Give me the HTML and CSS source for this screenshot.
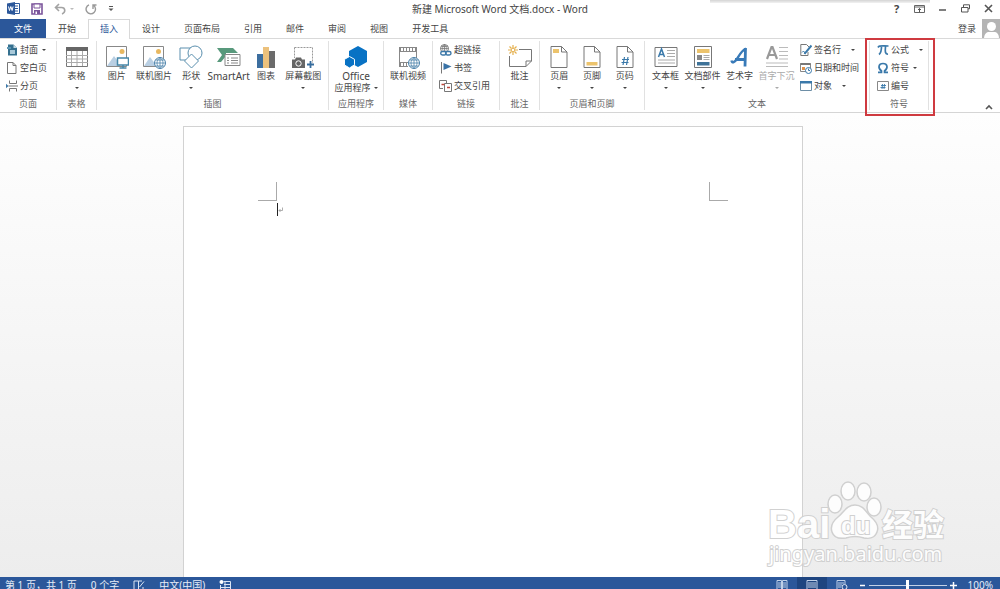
FILE: index.html
```html
<!DOCTYPE html>
<html lang="zh-CN">
<head>
<meta charset="UTF-8">
<meta name="viewport" content="width=device-width, initial-scale=1.0">
<title>新建 Microsoft Word 文档.docx - Word</title>
<link rel="stylesheet" href="styles.css">
</head>
<body>
    <header class="titlebar">
        <div class="quick">
            <svg width="13" height="13" viewBox="0 0 13 13"><path d="M7 1.500h5.500v10H7z" fill="#fff" stroke="#2b579a"/><path d="M8 4h3M8 6.500h3M8 9h3" stroke="#2b579a"/><path d="M0 1.500L8 0v13L0 11.500z" fill="#2b579a"/><path d="M1.500 4.500l1 4 1.300-4 1.300 4 1-4" fill="none" stroke="#fff"/></svg>
            <button aria-label="保存"><svg width="12" height="12" viewBox="0 0 12 12"><path d="M1 1h10v10H1z" fill="#fff" stroke="#7c559c" stroke-width="1.600"/><path d="M3 1h6v4H3z" fill="#fff" stroke="#7c559c"/><path d="M3 7h6v4H3z" fill="#7c559c"/><path d="M4.500 8.500h1.500V11H4.500z" fill="#fff"/></svg></button>
            <button aria-label="撤销"><svg width="20" height="12" viewBox="0 0 20 12"><path d="M5 1L1.500 4.500 5 8M2 4.500h5.500c4 0 4.500 5 .5 6.500" fill="none" stroke="#a3a3a3" stroke-width="1.600"/><path d="M16 5h4l-2 2z" fill="#bbb"/></svg></button>
            <button aria-label="重复"><svg width="12" height="12" viewBox="0 0 12 12"><path d="M4 1.800a4.700 4.700 0 1 0 4.500.5M8 6V2h3.500" fill="none" stroke="#999" stroke-width="1.400"/></svg></button>
            <button aria-label="自定义快速访问工具栏"><svg width="6" height="6" viewBox="0 0 6 6"><path d="M1 .5h4" stroke="#555"/><path d="M.5 2.500h5L3 5z" fill="#555"/></svg></button>
        </div>
        <h1>新建 Microsoft Word 文档.docx - Word</h1>
        <div class="window-buttons">
            <button class="help">?</button>
            <button aria-label="功能区显示选项"><svg width="11" height="10" viewBox="0 0 11 10"><path d="M.5 1.500h10v7H.5zM.5 3h10" fill="none" stroke="#666"/><path d="M5.500 8V4.500M4 6l1.500-1.500L7 6" fill="none" stroke="#555"/></svg></button>
            <button aria-label="最小化"><svg width="9" height="9" viewBox="0 0 9 9"><path d="M1 6h7" stroke="#555" stroke-width="1.500"/></svg></button>
            <button aria-label="还原"><svg width="9" height="9" viewBox="0 0 9 9"><path d="M2.500 3V.8h6v4H7M.5 3.500H7v4.500H.5z" fill="none" stroke="#555"/></svg></button>
            <button aria-label="关闭"><svg width="9" height="9" viewBox="0 0 9 9"><path d="M1 1l7 7M8 1L1 8" stroke="#555" stroke-width="1.600"/></svg></button>
        </div>
        <div class="top-shadow"></div>
    </header>

    <nav class="tabs">
        <a class="file" href="#">文件</a>
        <a href="#">开始</a>
        <a class="active" href="#">插入</a>
        <a href="#">设计</a>
        <a href="#">页面布局</a>
        <a href="#">引用</a>
        <a href="#">邮件</a>
        <a href="#">审阅</a>
        <a href="#">视图</a>
        <a href="#">开发工具</a>
        <div class="account">
            <a href="#">登录</a>
            <svg width="18" height="20" viewBox="0 0 18 20"><path d="M0 0h18v20H0z" fill="#b4b4b4"/><circle cx="9.500" cy="7.500" r="4.500" fill="#fff"/><path d="M2 20c0-5 2.500-7 5-7h5c3 0 5 2 5 7z" fill="#fff"/></svg>
        </div>
    </nav>

    <main class="ribbon">
        <section class="group">
            <div class="tools small">
                <button><svg width="12" height="12" viewBox="0 0 12 12"><path d="M2 .5h5.500L11 4v7.500H2z" fill="#35708f"/><path d="M7.500.5V4H11z" fill="#c4d8e2"/><path d="M4 6h5v4H4z" fill="#a9c9d9"/><path d="M1 3h4v2H1z" fill="#5c96b4"/></svg>封面<i class="arrow"></i></button>
                <button><svg width="12" height="12" viewBox="0 0 12 12"><path d="M1.500 .5h5.500L10 3.500v8H1.500zM7 .5v3h3" fill="#fff" stroke="#777"/></svg>空白页</button>
                <button><svg width="12" height="12" viewBox="0 0 12 12"><path d="M3.500 .5V3.500h7V.5M3.500 11.500V8.500h7v3M2.500 6h9.500" fill="none" stroke="#777"/><path d="M0 3.800L2.500 6 0 8.200z" fill="#3d78a8"/></svg>分页</button>
            </div>
            <h2>页面</h2>
        </section>

        <section class="group">
            <div class="tools large">
                <button><svg width="24" height="24" viewBox="0 0 24 24"><path d="M1.500 3.500h21v18h-21z" fill="#fff" stroke="#777"/><path d="M1 2h22v4H1z" fill="#666"/><path d="M1 10.500h22M1 14h22M1 17.500h22M6.500 6v15M12 6v15M17.500 6v15" stroke="#aaa"/></svg><span>表格</span><i class="arrow"></i></button>
            </div>
            <h2>表格</h2>
        </section>

        <section class="group illustrations">
            <div class="tools large">
                <button><svg width="24" height="24" viewBox="0 0 24 24"><path d="M1.500 1.500h20v20h-20z" fill="#fff" stroke="#888"/><circle cx="17" cy="6.500" r="2.500" fill="#e8b860"/><path d="M2 21l7-10 6 8v2z" fill="#b9cfe3"/><path d="M12.500 13h11v7h-11z" fill="#fff" stroke="#4587a8" stroke-width="1.500"/><path d="M18 20v3M14.500 23h7" stroke="#4587a8" stroke-width="1.500"/></svg><span>图片</span></button>
                <button><svg width="24" height="24" viewBox="0 0 24 24"><path d="M1.500 1.500h20v20h-20z" fill="#fff" stroke="#888"/><circle cx="16.500" cy="6.500" r="2.500" fill="#e8b860"/><path d="M2 21l6-9 6 8v1z" fill="#b9cfe3"/><circle cx="18" cy="18" r="5.500" fill="#fff" stroke="#4c83ab"/><path d="M12.500 18h11M13.500 15h9M13.500 21h9M18 12.500v11M18 12.500c-4 3-4 8 0 11 4-3 4-8 0-11" fill="none" stroke="#4c83ab" stroke-width=".8"/></svg><span>联机图片</span></button>
                <button><svg width="24" height="24" viewBox="0 0 24 24"><path d="M1 3h12v12H1z" fill="#fff" stroke="#5a8fae"/><circle cx="16" cy="8" r="7" fill="#fff" stroke="#5a8fae"/><path d="M12.500 9l7 7-7 7-7-7z" fill="#fff" stroke="#5a8fae"/></svg><span>形状</span><i class="arrow"></i></button>
                <button><svg width="24" height="24" viewBox="0 0 24 24"><path d="M0 3h16l5 5H9v3l-5 6H0l5-7z" fill="#58997c"/><path d="M8 9.500h15v11H8z" fill="#fff" stroke="#888"/><path d="M10 13h2M14 13h7M10 15.500h2M14 15.500h7M10 18h2M14 18h7" stroke="#888"/></svg><span class="latin">SmartArt</span></button>
                <button><svg width="24" height="24" viewBox="0 0 24 24"><path d="M3 9h6v14H3z" fill="#3c6e9f"/><path d="M9 2h6v21H9z" fill="#ecc17c"/><path d="M15 6h6v17h-6z" fill="#6b6b6b"/></svg><span>图表</span></button>
                <button><svg width="24" height="24" viewBox="0 0 24 24"><path d="M3.500 2.500h18V18M3.500 2.500V13" fill="none" stroke="#999" stroke-dasharray="2 1"/><path d="M1 14.500h3l1-2h5l1 2h3V23H1z" fill="#666"/><circle cx="7.500" cy="18.500" r="2.700" fill="#666" stroke="#fff"/><path d="M19.500 16v7M16 19.500h7" stroke="#386d9d" stroke-width="1.800"/></svg><span>屏幕截图</span><i class="arrow"></i></button>
            </div>
            <h2>插图</h2>
        </section>

        <section class="group">
            <div class="tools large">
                <button><svg width="24" height="24" viewBox="0 0 24 24"><path d="M14 1l9 5v11l-9 5-9-5V6z" fill="#0872c4"/><path d="M5.500 11.500l5 2.800v5.500L5.500 23 .5 20v-5.700z" fill="#0872c4" stroke="#fff"/></svg><span class="latin">Office</span><span class="second">应用程序<i class="arrow"></i></span></button>
            </div>
            <h2>应用程序</h2>
        </section>

        <section class="group">
            <div class="tools large">
                <button><svg width="24" height="24" viewBox="0 0 24 24"><path d="M3 2.500h18M3 6.500h18M3 17.500h9M3 21.500h9M3.500 2v20M20.500 2v11" fill="none" stroke="#888"/><path d="M4 4.500h17M4 19.500h8" stroke="#888" stroke-width="3" stroke-dasharray="1 2"/><circle cx="18" cy="18" r="5.500" fill="#fff" stroke="#4c83ab"/><path d="M12.500 18h11M13.500 15h9M13.500 21h9M18 12.500v11M18 12.500c-4 3-4 8 0 11 4-3 4-8 0-11" fill="none" stroke="#4c83ab" stroke-width=".8"/></svg><span>联机视频</span></button>
            </div>
            <h2>媒体</h2>
        </section>

        <section class="group">
            <div class="tools small">
                <button><svg width="13" height="12" viewBox="0 0 13 12"><circle cx="5.500" cy="4.500" r="4" fill="#fff" stroke="#777"/><path d="M1.500 4.500h8M2.500 2.500h6M5.500.5v8M5.500.5c-2.500 2-2.500 6 0 8 2.500-2 2.500-6 0-8" fill="none" stroke="#777" stroke-width=".8"/><path d="M2 7h10v5H2z" fill="#fff"/><rect x="1.700" y="7.500" width="5.500" height="3.500" rx="1.700" fill="none" stroke="#3d78a8" stroke-width="1.400"/><rect x="6.500" y="7.500" width="5.500" height="3.500" rx="1.700" fill="none" stroke="#3d78a8" stroke-width="1.400"/></svg>超链接</button>
                <button><svg width="13" height="12" viewBox="0 0 13 12"><path d="M2.500 0v11.500" stroke="#777"/><path d="M4.500 1l8 3.500-8 3.500z" fill="#3a73a6"/></svg>书签</button>
                <button><svg width="13" height="12" viewBox="0 0 13 12"><path d="M7.500 3V.5h-7v8H4M5.500 3.500h7v8h-7z" fill="none" stroke="#777"/><path d="M2.500 4.500h3M8 7.500h3" stroke="#c0473e" stroke-width="1.500"/></svg>交叉引用</button>
            </div>
            <h2>链接</h2>
        </section>

        <section class="group">
            <div class="tools large">
                <button><svg width="24" height="24" viewBox="0 0 24 24"><path d="M11 4.500h12.500V16L18 21.500H1.500V11M23.500 16H18v5.500" fill="#fff" stroke="#777"/><path d="M5 0v3M5 7v3M0 5h3M7 5h3M1.500 1.500l2 2M8.500 1.500l-2 2M1.500 8.500l2-2M8.500 8.500l-2-2" stroke="#e5b04e" stroke-width="1.200"/><circle cx="5" cy="5" r="1.800" fill="#fff" stroke="#e5b04e"/></svg><span>批注</span></button>
            </div>
            <h2>批注</h2>
        </section>

        <section class="group header-footer">
            <div class="tools large">
                <button><svg width="24" height="24" viewBox="0 0 24 24"><path d="M4 1.500h10.500L20 7v15.500H4zM14.500 1.500V7H20" fill="#fff" stroke="#777"/><path d="M6 4h6v4H6z" fill="#ecc36c"/></svg><span>页眉</span><i class="arrow"></i></button>
                <button><svg width="24" height="24" viewBox="0 0 24 24"><path d="M4 1.500h10.500L20 7v15.500H4zM14.500 1.500V7H20" fill="#fff" stroke="#777"/><path d="M6.500 17h11v3.500h-11z" fill="#ecc36c"/></svg><span>页脚</span><i class="arrow"></i></button>
                <button><svg width="24" height="24" viewBox="0 0 24 24"><path d="M4 1.500h10.500L20 7v15.500H4zM14.500 1.500V7H20" fill="#fff" stroke="#777"/><path d="M11.500 12l-1.500 8M15 12l-1.500 8M9 14.500h7M8.500 17.500h7" stroke="#3a79aa" stroke-width="1.200"/></svg><span>页码</span><i class="arrow"></i></button>
            </div>
            <h2>页眉和页脚</h2>
        </section>

        <section class="group text-group">
            <div class="tool-row">
                <div class="tools large">
                    <button><svg width="24" height="24" viewBox="0 0 24 24"><path d="M1 2.500h22v19H1z" fill="#fff" stroke="#777"/><path d="M4.500 12l3-8 3 8M5.500 9.500h4" fill="none" stroke="#3a79aa" stroke-width="1.500"/><path d="M13 5.500h8M13 8.500h8M13 11.500h8M4 15h17M4 18h17" stroke="#aaa"/></svg><span>文本框</span><i class="arrow"></i></button>
                    <button><svg width="24" height="24" viewBox="0 0 24 24"><path d="M3.500 1.500h17v21h-17z" fill="#fff" stroke="#777"/><path d="M6 4h12.500v4H6z" fill="#ecc36c"/><path d="M6 10h5v5H6z" fill="#888"/><path d="M12.500 10.500h6M12.500 12.500h6M12.500 14.500h6" stroke="#aaa"/><path d="M6 17h12.500v3.500H6z" fill="#3f7399"/></svg><span>文档部件</span><i class="arrow"></i></button>
                    <button><svg width="24" height="24" viewBox="0 0 24 24"><path d="M3.500 15.500c.5 3 3 2 5-1C11 11 13 6 18 3.500" fill="none" stroke="#387ab8" stroke-width="2.400"/><path d="M17.500 3L17 21.500M7 14.500h10.500" fill="none" stroke="#387ab8" stroke-width="2.800"/></svg><span>艺术字</span><i class="arrow"></i></button>
                    <button disabled><svg width="24" height="24" viewBox="0 0 24 24"><path d="M2 14L6.500 2h1L12 14M3.500 10h7" fill="none" stroke="#999" stroke-width="2.200"/><path d="M14 2.500h9M14 6.500h9M14 10.500h9M14 14h9M1 18h22M1 21.500h22" stroke="#bbb"/></svg><span>首字下沉</span><i class="arrow"></i></button>
                </div>
                <div class="tools small">
                    <button><svg width="12" height="12" viewBox="0 0 12 12"><path d="M8 11.500H.8V.5h5.700L9 3M8 11.500V8" fill="#fff" stroke="#777"/><path d="M11.500 1.500L6 8l-1.500 2" stroke="#3a79aa" stroke-width="2"/><path d="M2 8.500l1.500-1.500L5 9" fill="none" stroke="#3a79aa"/></svg>签名行<i class="arrow far"></i></button>
                    <button><svg width="12" height="12" viewBox="0 0 12 12"><path d="M.5 1.500h10v8H.5z" fill="#fff" stroke="#888"/><path d="M.5 1h10v2H.5z" fill="#777"/><path d="M2 5h3v3H2z" fill="#df914b"/><circle cx="8.500" cy="8.500" r="3" fill="#fff" stroke="#3a79aa"/><path d="M8.500 6.500v2h1.500" fill="none" stroke="#3a79aa"/></svg>日期和时间</button>
                    <button><svg width="12" height="12" viewBox="0 0 12 12"><path d="M.5 1.500h11v9H.5z" fill="#fff" stroke="#6d8ea6"/><path d="M0 1h12v2.500H0z" fill="#3a79aa"/></svg>对象<i class="arrow far"></i></button>
                </div>
            </div>
            <h2>文本</h2>
        </section>

        <section class="group symbols">
            <div class="tools small">
                <button><svg width="12" height="12" viewBox="0 0 12 12"><path d="M1 3.500C2 1.500 3 2 11.500 2M4.500 2.500C4.500 6 4 9 2 10.500M8.500 2.500c-.5 5-.5 8 2.500 7.500" fill="none" stroke="#3a79aa" stroke-width="1.700"/></svg>公式<i class="arrow far"></i></button>
                <button><svg width="12" height="12" viewBox="0 0 12 12"><path d="M1 10.300h3.500V9C.5 6 1.500 1.500 6 1.500S11.500 6 7.500 9v1.300H11" fill="none" stroke="#3a79aa" stroke-width="1.700"/></svg>符号<i class="arrow"></i></button>
                <button><svg width="12" height="12" viewBox="0 0 12 12"><path d="M.5 1.500h11v9H.5z" fill="#fff" stroke="#888"/><path d="M5.500 4L5 9M7.500 4L7 9M4 5.500h5M3.500 7.500h5" stroke="#3a79aa" stroke-width=".9"/></svg>编号</button>
            </div>
            <h2>符号</h2>
            <div class="highlight"></div>
        </section>

        <div class="collapse">
            <button aria-label="折叠功能区"><svg width="8" height="6" viewBox="0 0 8 6"><path d="M1 5l3-3 3 3" fill="none" stroke="#555" stroke-width="1.600"/></svg></button>
        </div>
    </main>

    <div class="workspace">
        <article class="page">
            <div class="corners">
                <i class="corner left"></i>
                <i class="corner right"></i>
            </div>
            <div class="cursor"><svg width="6" height="13" viewBox="0 0 6 13"><path d="M.5 0v13" stroke="#222"/><path d="M5.500 4.500v3H2M3.500 6L2 7.500 3.500 9" fill="none" stroke="#999" stroke-width=".8"/></svg></div>
        </article>
        <svg class="watermark" width="184" height="92" viewBox="0 0 184 92">
            <g fill="#fff" stroke="#cdcdcd" stroke-width="1.500">
                <ellipse cx="70" cy="23" rx="7" ry="9"/>
                <ellipse cx="83" cy="10" rx="7" ry="9"/>
                <ellipse cx="99" cy="11" rx="7" ry="9"/>
                <ellipse cx="109" cy="26" rx="7" ry="9"/>
                <path d="M90 24c8 0 11 7 16 12 6 5 8 10 6 15-2 6-8 7-13 6-6-2-12-2-18 0-6 1-12 0-14-6-2-6 1-11 6-15 6-5 9-12 17-12z"/>
                <text class="brand" x="3" y="57">Bai</text>
                <text class="brand-du" x="76" y="53">du</text>
                <text class="brand-cn" x="117" y="55">经验</text>
                <text class="brand-url" x="4" y="80">jingyan.baidu.com</text>
            </g>
        </svg>
    </div>

    <footer class="statusbar">
        <span>第 1 页，共 1 页</span>
        <span>0 个字</span>
        <svg width="12" height="12" viewBox="0 0 12 12"><path d="M5.500 11V2H1v9h4.500zM5.500 2H9M5.500 11H10V8M6.500 8L11 2.500" fill="none" stroke="#dbe5f3"/></svg>
        <span>中文(中国)</span>
        <svg width="12" height="12" viewBox="0 0 12 12"><path d="M4.500 2.500h7v9h-10V6M5 5.500h6M2 8.500h9M6 3v8" fill="none" stroke="#dbe5f3"/><circle cx="2.500" cy="3" r="2" fill="#fff"/></svg>
        <div class="views">
            <button aria-label="阅读视图"><svg width="12" height="12" viewBox="0 0 12 12"><path d="M1 1.500h4.500v9.500H1zM6.500 1.500H11v9.500H6.500zM2 4h3M2 6h3M2 8h3M7 4h3M7 6h3M7 8h3" fill="none" stroke="#bfd0e8"/></svg></button>
            <button class="on" aria-label="页面视图"><svg width="12" height="12" viewBox="0 0 12 12"><path d="M1 1.500h10v10H1zM2 4h8M2 6h8M2 8h8" fill="none" stroke="#bfd0e8"/></svg></button>
            <button aria-label="Web 版式视图"><svg width="12" height="12" viewBox="0 0 12 12"><path d="M6 11.500H1v-10h8V5M2 4h6M2 6h4M2 8h3" fill="none" stroke="#bfd0e8"/><circle cx="8.500" cy="8" r="2.500" fill="none" stroke="#dbe5f3"/></svg></button>
        </div>
        <div class="zoom">
            <button aria-label="缩小"><svg width="7" height="7" viewBox="0 0 7 7"><path d="M1 3.500h5" stroke="#fff" stroke-width="1.500"/></svg></button>
            <input type="range" min="0" max="100" value="50" aria-label="显示比例">
            <button aria-label="放大"><svg width="7" height="7" viewBox="0 0 7 7"><path d="M0 3.500h7M3.500 0v7" stroke="#fff" stroke-width="1.500"/></svg></button>
            <span>100%</span>
        </div>
    </footer>
</body>
</html>
```

FILE: styles.css
```css
* {
    box-sizing: border-box;
}
body {
    display: flex;
    flex-direction: column;
    height: 100vh;
    margin: 0;
    overflow: hidden;
    background-color: #fff;
    color: #444;
    font-family: "Noto Sans", "Noto Sans CJK SC", sans-serif;
    font-size: 9px;
    line-height: 12px;
    white-space: nowrap;
}
button {
    padding: 0;
    border: none;
    background: none;
    color: inherit;
    font: inherit;
    cursor: pointer;
}
a {
    color: inherit;
    text-decoration: none;
}
svg {
    display: block;
    flex: none;
}
h1, h2 {
    margin: 0;
    font-weight: normal;
}

/* title bar */
.titlebar {
    position: relative;
    display: grid;
    grid-template-columns: 1fr auto 1fr;
    align-items: center;
    height: 19px;
    padding-bottom: 2px;
    flex: none;
}
.titlebar h1 {
    font-size: 10px;
}
.quick {
    display: flex;
    align-items: center;
    gap: 11px;
    padding-left: 7px;
}
.window-buttons {
    display: flex;
    justify-content: flex-end;
}
.window-buttons button {
    display: flex;
    align-items: center;
    justify-content: center;
    width: 23px;
}
.window-buttons .help {
    font-size: 11px;
    font-weight: bold;
}
.top-shadow {
    position: absolute;
    top: 0;
    left: 71%;
    width: 22%;
    height: 3px;
    background: linear-gradient(#d4d4d4, #f2f2f2);
}

/* tabs */
.tabs {
    display: flex;
    flex: none;
    height: 20px;
    line-height: 19px;
    border-bottom: 1px solid #d9d9d9;
}
.tabs > a {
    padding: 0 12px;
}
.tabs .file {
    width: 46px;
    background-color: #2b579a;
    color: #fff;
    text-align: center;
}
.tabs .active {
    height: 20px;
    padding: 0 11px;
    border: 1px solid #d9d9d9;
    border-bottom: none;
    background-color: #fff;
    color: #2b579a;
    line-height: 18px;
}
.account {
    display: flex;
    gap: 6px;
    height: 19px;
    margin-left: auto;
    overflow: hidden;
}

/* ribbon */
.ribbon {
    display: grid;
    grid-template-columns: 57fr 40fr 232fr 55fr 49fr 67fr 40fr 105fr 225fr 59fr 71fr;
    flex: none;
    height: 74px;
    padding: 2px 0;
    border-bottom: 1px solid #d5d5d5;
}
.group {
    position: relative;
    display: flex;
    flex-direction: column;
    justify-content: space-between;
    min-width: 0;
    border-right: 1px solid #e1e1e1;
}
.group h2 {
    color: #666;
    font-size: 9px;
    text-align: center;
}
.large {
    display: grid;
    grid-auto-flow: column;
    grid-auto-columns: minmax(0, 1fr);
}
.large button {
    display: flex;
    flex-direction: column;
    align-items: center;
    height: 54px;
    padding-top: 4px;
}
.large span {
    line-height: 14px;
}
.large .latin {
    font-size: 10px;
}
.large .second {
    display: flex;
    align-items: center;
    gap: 3px;
    line-height: 10px;
}
.large > button > .arrow {
    margin-top: 4px;
}
.large button:disabled {
    color: #aaa;
}
.small {
    display: flex;
    flex-direction: column;
    padding-left: 6px;
}
.small button {
    display: flex;
    align-items: center;
    gap: 2px;
    height: 18px;
}
.arrow {
    border: 2px solid transparent;
    border-top-color: currentColor;
    border-bottom: none;
}
.small .arrow {
    margin-left: 2px;
}
.small .far {
    margin-left: 8px;
}
.illustrations .tools {
    padding: 0 6px 0 1px;
}
.header-footer .tools {
    padding: 0 3px;
}
.tool-row {
    display: grid;
    grid-template-columns: 150fr 74fr;
}
.text-group .large {
    padding-left: 2px;
}
.text-group .small {
    padding-left: 5px;
}
.symbols .small {
    padding-left: 7px;
}
.highlight {
    position: absolute;
    z-index: 1;
    top: -3px;
    right: -7px;
    bottom: -6px;
    left: -5px;
    border: 2px solid #cf3a40;
    pointer-events: none;
}
.collapse {
    display: flex;
    align-items: flex-end;
    justify-content: flex-end;
    padding-right: 7px;
}

/* document area */
.workspace {
    position: relative;
    display: flex;
    justify-content: center;
    flex: 1;
    min-height: 0;
    padding: 13px 14px 0 0;
    background: linear-gradient(#fefefe, #ededed);
}
.page {
    width: 100%;
    max-width: 620px;
    padding: 55px 74px 0;
    border: 1px solid #d2d2d2;
    border-bottom: none;
    background-color: #fff;
}
.corners {
    display: flex;
    justify-content: space-between;
}
.corner {
    width: 19px;
    height: 19px;
    border-bottom: 1px solid #aaa;
}
.corner.left {
    border-right: 1px solid #aaa;
}
.corner.right {
    border-left: 1px solid #aaa;
}
.cursor {
    padding: 2px 0 0 19px;
}
.watermark {
    position: absolute;
    right: 51px;
    bottom: 4px;
    opacity: 0.9;
}
.watermark text {
    paint-order: stroke;
    stroke-width: 2px;
}
.brand {
    font: bold 40px "Liberation Sans", sans-serif;
}
.brand-du {
    font: bold 24px "Liberation Sans", sans-serif;
}
.brand-cn {
    font: bold 31px "Noto Sans CJK SC", sans-serif;
}
.brand-url {
    font: 20px "Noto Sans", sans-serif;
}

/* status bar, its lower edge runs under the window */
.statusbar {
    position: relative;
    display: flex;
    align-items: center;
    gap: 14px;
    flex: none;
    height: 16px;
    margin-bottom: -4px;
    padding: 0 7px 0 5px;
    background-color: #2b579a;
    color: #e6edf7;
    font-size: 10px;
}
.views {
    display: flex;
    margin-left: auto;
}
.views button {
    display: flex;
    align-items: center;
    justify-content: center;
    width: 30px;
    height: 16px;
}
.views .on {
    background-color: #1e4580;
}
.zoom {
    display: flex;
    align-items: center;
    gap: 3px;
    margin-left: -12px;
}
.zoom span {
    margin-left: 8px;
}
.zoom input {
    width: 78px;
    height: 12px;
    margin: 0;
    appearance: none;
    background: linear-gradient(#c3d1e6, #c3d1e6) center / 100% 1px no-repeat;
}
.zoom input::-webkit-slider-thumb {
    appearance: none;
    width: 3px;
    height: 10px;
    background-color: #fff;
}
```
